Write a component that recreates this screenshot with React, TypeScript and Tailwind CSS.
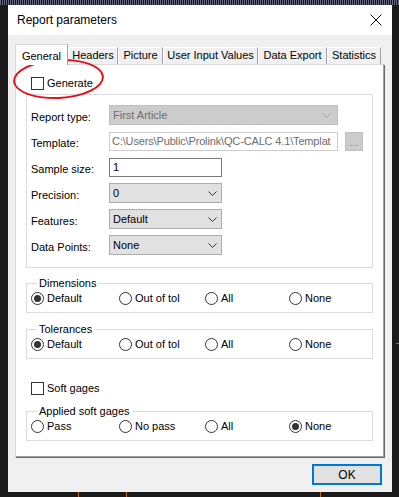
import type { ReactNode } from 'react';

const TABS = [
  { label: 'General', w: 'w-[53px]' },
  { label: 'Headers', w: 'w-[50px]' },
  { label: 'Picture', w: 'w-[45px]' },
  { label: 'User Input Values', w: 'w-[95px]' },
  { label: 'Data Export', w: 'w-[69px]' },
  { label: 'Statistics', w: 'w-[54px]' },
];

const COL_W = ['w-[88px]', 'w-[86px]', 'w-[84px]', 'w-[80px]'];

function Chevron({ color = '#333333' }: { color?: string }) {
  return (
    <svg width="9" height="5" viewBox="0 0 9 5" className="shrink-0">
      <path d="M0.5 0.5 L4.5 4.5 L8.5 0.5" fill="none" stroke={color} strokeWidth="1" />
    </svg>
  );
}

function CheckBox({ label }: { label: string }) {
  return (
    <div className="flex items-center h-[13px] ml-[15px]">
      <span className="w-[13px] h-[13px] border border-[#333333] bg-white shrink-0" />
      <span className="ml-[3px] leading-[13px]">{label}</span>
    </div>
  );
}

function Radio({ label, checked }: { label: string; checked?: boolean }) {
  return (
    <div className="flex items-center h-[13px]">
      <span className="w-[13px] h-[13px] rounded-full border border-[#333333] bg-white shrink-0 flex items-center justify-center">
        {checked && <span className="w-[7px] h-[7px] rounded-full bg-[#333333]" />}
      </span>
      <span className="ml-[3px] leading-[13px]">{label}</span>
    </div>
  );
}

function RadioGroup({ title, options, selected, className }: { title: string; options: string[]; selected: number; className: string }) {
  return (
    <fieldset className={`ml-[10px] w-[347px] border border-[#dcdcdc] pt-[2px] pb-[7px] pl-[4px] ${className}`}>
      <legend className="ml-[6px] px-[2px] leading-[13px]">{title}</legend>
      <div className="flex">
        {options.map((o, i) => (
          <div key={o} className={COL_W[i]}>
            <Radio label={o} checked={i === selected} />
          </div>
        ))}
      </div>
    </fieldset>
  );
}

function Row({ label, children }: { label: string; children: ReactNode }) {
  return (
    <div className="flex items-center h-[20px]">
      <span className="w-[78px] pt-[4px] shrink-0">{label}</span>
      {children}
    </div>
  );
}

function Combo({ value }: { value: string }) {
  return (
    <div className="w-[113px] h-[20px] bg-[#e1e1e1] border border-[#adadad] flex items-center justify-between pl-[3px] pr-[4px]">
      <span>{value}</span>
      <Chevron />
    </div>
  );
}

export default function App() {
  return (
    <div
      className="relative w-[399px] h-[497px] overflow-hidden bg-[#1b1b1b] text-[11px] text-black"
      style={{ fontFamily: '"Liberation Sans", Arial, sans-serif' }}
    >
      {/* background behind the dialog */}
      <div className="h-[5px] bg-[repeating-linear-gradient(90deg,#6a6a80_0_1px,#141414_1px_2px)]" />

      <div className="flex">
        <div className="ml-[8px] w-[384px] h-[487px] bg-[#f0f0f0] flex flex-col">
          {/* title bar */}
          <div className="h-[30px] bg-white flex items-center justify-between pl-[9px] pr-[10px]">
            <span className="text-[12px]">Report parameters</span>
            <svg width="12" height="12" viewBox="0 0 12 12">
              <path d="M0.5 0.5 L11.5 11.5 M11.5 0.5 L0.5 11.5" stroke="#111111" strokeWidth="1" />
            </svg>
          </div>

          <div className="pl-[7px] pr-[8px] pt-[8px]">
            {/* tabs */}
            <div className="flex items-end h-[21px]">
              {TABS.map((t, i) =>
                i === 0 ? (
                  <div
                    key={t.label}
                    className={`${t.w} h-[21px] -mb-px relative z-10 bg-white border-l border-t border-[#dadada] border-r border-r-[#a0a0a0] flex items-center justify-center pt-[2px]`}
                  >
                    {t.label}
                  </div>
                ) : (
                  <div
                    key={t.label}
                    className={`${t.w} h-[17px] bg-[#f0f0f0] border-l border-t border-white border-r border-r-[#a0a0a0] flex items-center justify-center pb-[2px]`}
                  >
                    {t.label}
                  </div>
                )
              )}
            </div>

            {/* tab page */}
            <div className="w-[369px] h-[393px] bg-white border-l border-t border-[#dadada] border-r border-b border-r-[#a0a0a0] border-b-[#a0a0a0] shadow-[1px_1px_0_#696969] pt-[12px]">
              <CheckBox label="Generate" />

              <div className="mt-[4px] ml-[10px] w-[347px] h-[174px] border border-[#dcdcdc] pt-[10px] pl-[4px] flex flex-col gap-[6px]">
                <Row label="Report type:">
                  <div className="w-[229px] h-[20px] bg-[#cccccc] border border-[#bfbfbf] flex items-center justify-between pl-[3px] pr-[6px] text-[#6d6d6d]">
                    <span>First Article</span>
                    <Chevron color="#a0a0a0" />
                  </div>
                </Row>
                <Row label="Template:">
                  <div className="w-[229px] h-[19px] bg-white border border-[#cccccc] flex items-center pl-[2px] text-[#6d6d6d] tracking-[-0.15px] overflow-hidden whitespace-nowrap">
                    C:\Users\Public\Prolink\QC-CALC 4.1\Templat
                  </div>
                  <div className="ml-[7px] w-[18px] h-[19px] bg-[#cccccc] border border-[#bfbfbf] flex items-center justify-center text-[#8a8a8a] leading-none pt-[3px]">
                    ...
                  </div>
                </Row>
                <Row label="Sample size:">
                  <div className="w-[113px] h-[19px] bg-white border border-[#7a7a7a] flex items-center pl-[3px]">1</div>
                </Row>
                <Row label="Precision:">
                  <Combo value="0" />
                </Row>
                <Row label="Features:">
                  <Combo value="Default" />
                </Row>
                <Row label="Data Points:">
                  <Combo value="None" />
                </Row>
              </div>

              <RadioGroup className="mt-[9px]" title="Dimensions" options={['Default', 'Out of tol', 'All', 'None']} selected={0} />
              <RadioGroup className="mt-[10px]" title="Tolerances" options={['Default', 'Out of tol', 'All', 'None']} selected={0} />

              <div className="mt-[23px]">
                <CheckBox label="Soft gages" />
              </div>

              <RadioGroup className="mt-[10px]" title="Applied soft gages" options={['Pass', 'No pass', 'All', 'None']} selected={3} />
            </div>

            <div className="flex justify-end mt-[7px] pr-[2px]">
              <button className="w-[70px] h-[21px] bg-[#e1e1e1] border-2 border-[#0078d7] text-[12px] flex items-center justify-center">
                OK
              </button>
            </div>
          </div>
        </div>
        <div className="flex-1 relative">
          <div className="absolute top-[338px] left-[4px] w-[3px] h-px bg-[#c8641e]" />
        </div>
      </div>

      {/* red annotation circle */}
      <div className="absolute left-[13px] top-[59px] w-[91px] h-[40px] rounded-[50%] border-2 border-[#e0121a] -rotate-3 pointer-events-none" />

      {/* orange marks below the dialog */}
      <div className="absolute left-[78px] top-[492px] w-px h-[5px] bg-[#c8641e]" />
      <div className="absolute left-[126px] top-[492px] w-px h-[5px] bg-[#c8641e]" />
      <div className="absolute left-[320px] top-[492px] w-px h-[5px] bg-[#c8641e]" />
    </div>
  );
}
